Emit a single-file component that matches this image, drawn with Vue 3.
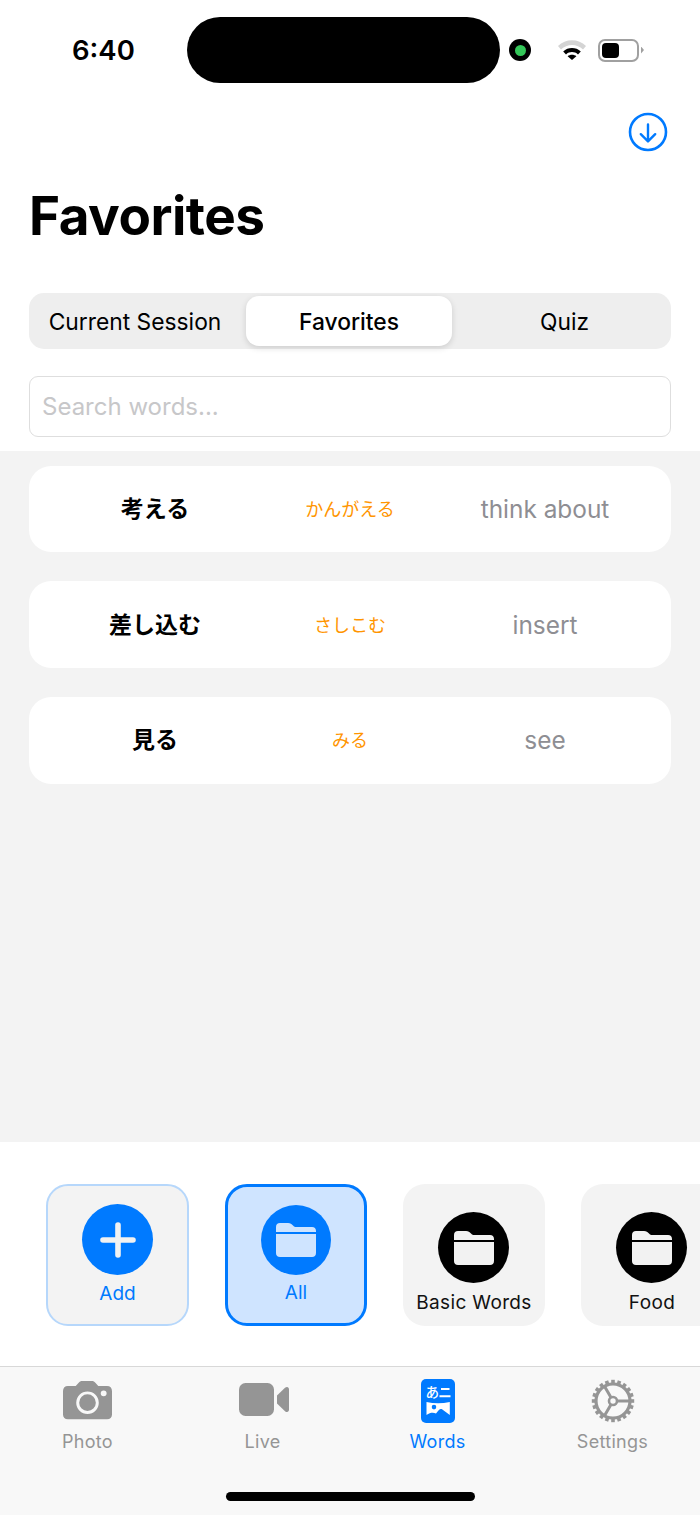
<script setup>
const segments = [
  { label: 'Current Session', active: false },
  { label: 'Favorites', active: true },
  { label: 'Quiz', active: false },
]
const words = [
  { kanji: '考える', kana: 'かんがえる', en: 'think about' },
  { kanji: '差し込む', kana: 'さしこむ', en: 'insert' },
  { kanji: '見る', kana: 'みる', en: 'see' },
]
const folders = [
  { label: 'Basic Words' },
  { label: 'Food' },
]
const teeth = Array.from({ length: 20 }, (_, i) => i * 18)
</script>

<template>
  <div class="screen">
    <header class="head">
      <div class="status">
        <span class="time">6:40</span>
        <div class="island"></div>
        <div class="dot"><i></i></div>
        <svg class="wifi" width="30" height="22" viewBox="0 0 30 22">
          <path d="M1 7C8.5 -.8 21.5 -.8 29 7L26 10.4C20 4.4 10 4.4 4 10.4Z" fill="#d4d4d4" />
          <path d="M6.2 12.4C11 7.9 19 7.9 23.8 12.4L21 15.4C17.6 12.2 12.4 12.2 9 15.4Z" fill="#000" />
          <path d="M10.6 17.2C13 15.2 17 15.2 19.4 17.2L15 21Z" fill="#000" />
        </svg>
        <div class="battery"><div class="cell"></div></div>
        <div class="nub"></div>
      </div>
      <div class="action">
        <svg width="40" height="40" viewBox="0 0 40 40" fill="none" stroke="#007aff">
          <circle cx="20" cy="20" r="18" stroke-width="2.6" />
          <path d="M20 12.5V29M12.8 22.2L20 29.4L27.2 22.2" stroke-width="2.4" stroke-linecap="round" stroke-linejoin="round" />
        </svg>
      </div>
      <h1 class="title">Favorites</h1>
      <div class="segmented">
        <div v-for="s in segments" :key="s.label" class="seg" :class="{ on: s.active }">{{ s.label }}</div>
      </div>
      <div class="search">Search words...</div>
    </header>

    <main class="list">
      <div v-for="w in words" :key="w.kanji" class="row">
        <div class="cell-w kanji">{{ w.kanji }}</div>
        <div class="cell-w kana">{{ w.kana }}</div>
        <div class="cell-w en">{{ w.en }}</div>
      </div>
    </main>

    <section class="folders">
      <div class="card add">
        <div class="disc blue">
          <svg width="36" height="36" viewBox="0 0 36 36"><path d="M18 3V33M3 18H33" stroke="#f2f2f2" stroke-width="5.6" stroke-linecap="round" /></svg>
        </div>
        <span class="card-label bluet">Add</span>
      </div>
      <div class="card all">
        <div class="disc blue">
          <svg width="40" height="34" viewBox="0 0 40 34"><path d="M0 9V4C0 1.5 1.5 0 4 0H12C14.5 0 15.5 1 17 2.5C18 3.5 19 4 20.5 4H36C38.5 4 40 5.5 40 8V9Z" fill="#cfe4ff" /><path d="M0 11H40V30C40 32.5 38.5 34 36 34H4C1.5 34 0 32.5 0 30Z" fill="#cfe4ff" /></svg>
        </div>
        <span class="card-label bluet">All</span>
      </div>
      <div v-for="f in folders" :key="f.label" class="card plain">
        <div class="disc black">
          <svg width="40" height="34" viewBox="0 0 40 34"><path d="M0 9V4C0 1.5 1.5 0 4 0H12C14.5 0 15.5 1 17 2.5C18 3.5 19 4 20.5 4H36C38.5 4 40 5.5 40 8V9Z" fill="#f2f2f2" /><path d="M0 11H40V30C40 32.5 38.5 34 36 34H4C1.5 34 0 32.5 0 30Z" fill="#f2f2f2" /></svg>
        </div>
        <span class="card-label spaced">{{ f.label }}</span>
      </div>
    </section>

    <nav class="tabs">
      <div class="tab">
        <svg class="tab-icon" width="49" height="39" viewBox="0 0 50 39.6">
          <path fill="#959595" fill-rule="evenodd" d="M5 5H13L16 1.6C17 .6 18 0 19.5 0H29.5C31 0 32 .6 33 1.6L36 5H45C48 5 50 7 50 10V34C50 37 48 39 45 39H5C2 39 0 37 0 34V10C0 7 2 5 5 5ZM25 10.5A11.5 11.5 0 1 0 25 33.5A11.5 11.5 0 1 0 25 10.5ZM25 13.5A8.5 8.5 0 1 1 25 30.5A8.5 8.5 0 1 1 25 13.5ZM41.5 9.5A3 3 0 1 0 41.5 15.5A3 3 0 1 0 41.5 9.5Z" />
        </svg>
        <span class="tab-label wide">Photo</span>
      </div>
      <div class="tab">
        <svg class="tab-icon shifted" width="50" height="40" viewBox="0 0 50 40">
          <rect x="0" y="3" width="35" height="33" rx="6.5" fill="#959595" />
          <path fill="#959595" d="M38 15.5L46 7.8C48 6.2 50 7 50 9.5V29.5C50 32 48 32.8 46 31.2L38 23.5Z" />
        </svg>
        <span class="tab-label wide">Live</span>
      </div>
      <div class="tab">
        <svg class="tab-icon" width="34" height="44" viewBox="0 0 34 44">
          <rect width="34" height="44" rx="5" fill="#007aff" />
          <text x="4.4" y="18.4" font-size="13.5" font-weight="500" fill="#fff" font-family="'Noto Sans CJK JP', sans-serif">あ</text>
          <path d="M20 10H28.5M18.5 17.2H29.5" stroke="#fff" stroke-width="2" />
          <path fill="#fff" fill-rule="evenodd" d="M5.5 23C13 24.8 21 24.8 28.8 23V36L21 30.2C19 29 17.5 31.5 15 34.4C12 33.4 9 33.6 5.5 36ZM13 25.8A2.3 2.3 0 1 0 13 30.4A2.3 2.3 0 1 0 13 25.8Z" />
        </svg>
        <span class="tab-label act">Words</span>
      </div>
      <div class="tab">
        <svg class="tab-icon" width="44" height="44" viewBox="0 0 44 44" fill="none" stroke="#959595">
          <circle cx="22" cy="22" r="17" stroke-width="3.2" />
          <path v-for="t in teeth" :key="t" d="M22 .8V5" stroke-width="3.6" :transform="`rotate(${t} 22 22)`" />
          <circle cx="22" cy="22" r="4" stroke-width="2.6" />
          <path d="M26 22H38M20 25.5L13.9 36M20 18.5L13.9 8" stroke-width="3" />
        </svg>
        <span class="tab-label">Settings</span>
      </div>
      <div class="home"></div>
    </nav>
  </div>
</template>

<style scoped>
.screen {
  width: 700px;
  height: 1515px;
  display: flex;
  flex-direction: column;
  background: #fff;
  overflow: hidden;
  font-family: Inter, "Noto Sans CJK JP", sans-serif;
}
.head {
  height: 451px;
  flex: none;
  display: flex;
  flex-direction: column;
  padding: 0 29px;
  box-sizing: border-box;
}
.status {
  display: flex;
  align-items: center;
  height: 66px;
  margin: 17px -29px 0;
}
.time {
  width: 187px;
  box-sizing: border-box;
  padding-left: 72px;
  font-size: 27.5px;
  font-weight: 600;
  color: #000;
}
.island {
  width: 313px;
  height: 66px;
  border-radius: 33px;
  background: #000;
}
.dot {
  width: 22px;
  height: 22px;
  margin-left: 9px;
  border-radius: 50%;
  background: #000;
  display: flex;
  align-items: center;
  justify-content: center;
}
.dot i {
  width: 11px;
  height: 11px;
  border-radius: 50%;
  background: #34c759;
}
.wifi { margin-left: 26px; }
.battery {
  width: 41px;
  height: 23px;
  margin-left: 11px;
  box-sizing: border-box;
  border: 2px solid #a0a0a0;
  border-radius: 7px;
  padding: 2px;
}
.cell {
  width: 17px;
  height: 15px;
  border-radius: 4px;
  background: #000;
}
.nub {
  width: 3px;
  height: 7px;
  margin-left: 2px;
  background: #a0a0a0;
  clip-path: polygon(0 0, 100% 50%, 0 100%);
}
.action {
  display: flex;
  justify-content: flex-end;
  margin: 29px 3px 0 0;
  height: 40px;
}
.title {
  margin: 32px 0 0;
  font-size: 53px;
  line-height: 64px;
  font-weight: 700;
  color: #000;
  letter-spacing: -0.5px;
}
.segmented {
  display: flex;
  gap: 8px;
  margin-top: 45px;
  height: 56px;
  box-sizing: border-box;
  padding: 3px;
  background: #eeeeee;
  border-radius: 15px;
}
.seg {
  flex: none;
  width: 206px;
  display: flex;
  align-items: center;
  justify-content: center;
  font-size: 22.8px;
  color: #000;
  white-space: nowrap;
  border-radius: 13px;
}
.seg:last-child { flex: 1; margin-left: 1px; }
.seg.on {
  background: #fff;
  font-weight: 500;
  box-shadow: 0 2px 6px rgba(0, 0, 0, 0.14);
}
.search {
  margin-top: 27px;
  height: 61px;
  box-sizing: border-box;
  display: flex;
  align-items: center;
  padding-left: 12px;
  border: 1px solid #dedede;
  border-radius: 9px;
  font-size: 24px;
  color: #c7c7c9;
}
.list {
  flex: 1;
  background: #f3f3f3;
  padding: 14.7px 29px;
  display: flex;
  flex-direction: column;
  gap: 29px;
}
.row {
  height: 86.7px;
  display: grid;
  grid-template-columns: repeat(3, 195px);
  justify-content: center;
  align-items: center;
  background: #fff;
  border-radius: 22px;
}
.cell-w { text-align: center; white-space: nowrap; }
.kanji { font-family: "Noto Sans CJK JP", sans-serif; font-size: 23px; font-weight: 700; color: #000; padding-bottom: 4px; }
.kana { font-family: "Noto Sans CJK JP", sans-serif; font-size: 18px; color: #ff9500; padding-bottom: 2px; }
.en { font-size: 24.4px; color: #8e8e93; }
.folders {
  flex: none;
  height: 224px;
  box-sizing: border-box;
  padding: 42px 0 0 46px;
  display: flex;
  gap: 36px;
  background: #fff;
  overflow: hidden;
}
.card {
  flex: none;
  width: 142px;
  height: 142px;
  box-sizing: border-box;
  border-radius: 22px;
  background: #f3f3f3;
  display: flex;
  flex-direction: column;
  align-items: center;
  color: #111;
}
.card.add { border: 2px solid #b6d7fb; padding-top: 18px; width: 143px; }
.card.all { border: 3.5px solid #007aff; background: #cfe4ff; padding-top: 18px; }
.card.plain { padding-top: 28px; }
.disc {
  width: 71px;
  height: 71px;
  flex: none;
  border-radius: 50%;
  display: flex;
  align-items: center;
  justify-content: center;
}
.plain .disc { margin-left: -1px; }
.all .disc { width: 70px; height: 70px; }
.disc.blue { background: #007aff; }
.disc.black { background: #000; }
.card-label {
  margin-top: 7px;
  font-size: 19px;
  line-height: 24px;
  white-space: nowrap;
}
.all .card-label { margin-top: 6px; }
.card-label.spaced { letter-spacing: 0.35px; margin-top: 8px; }
.bluet { color: #007aff; }
.tabs {
  flex: none;
  position: relative;
  height: 149px;
  box-sizing: border-box;
  display: flex;
  background: #f8f8f8;
  border-top: 1px solid #d8d8d8;
}
.tab {
  width: 175px;
  height: 87px;
  display: flex;
  flex-direction: column;
  align-items: center;
  justify-content: flex-end;
}
.tab-icon { flex: none; }
.tab-icon.shifted { margin-left: 2px; }
.tab-label {
  margin-top: 7px;
  font-size: 18px;
  line-height: 24px;
  color: #959595;
  letter-spacing: 0.3px;
}
.tab-label.wide { margin-top: 10px; }
.tab-label.act { color: #007aff; }
.home {
  position: absolute;
  left: 226px;
  bottom: 14px;
  width: 249px;
  height: 9px;
  border-radius: 5px;
  background: #000;
}
</style>
